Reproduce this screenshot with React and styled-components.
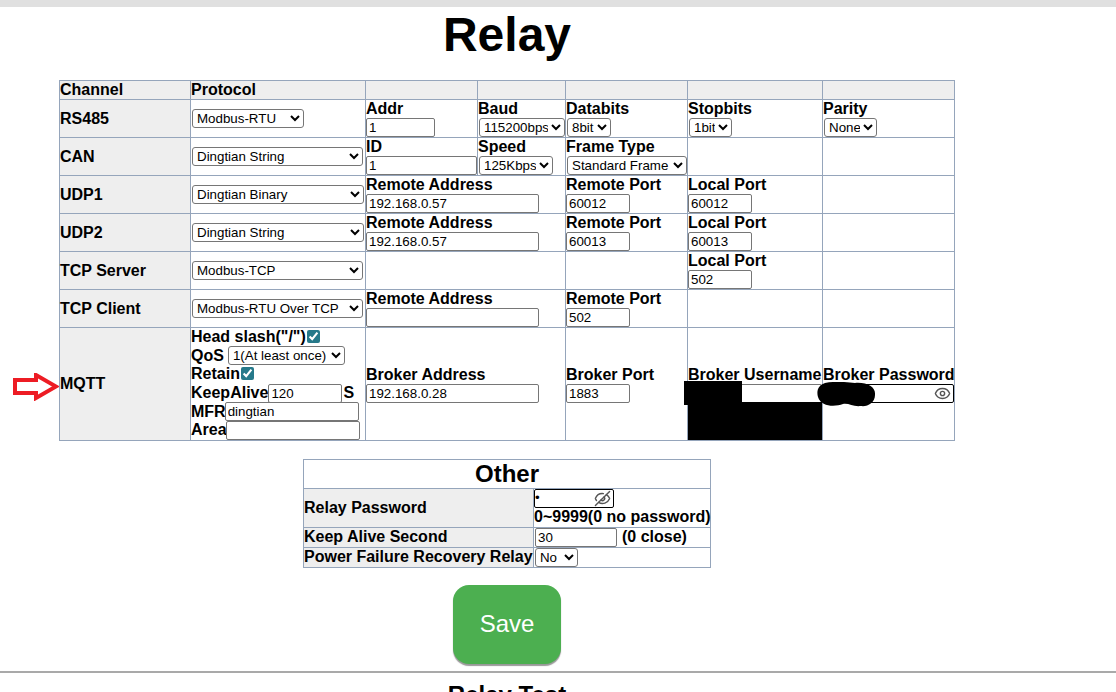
import React from "react";
import styled, { createGlobalStyle } from "styled-components";
import { Eye, EyeOff } from "lucide-react";

const Global = createGlobalStyle`
  html, body { margin: 0; padding: 0; height: 692px; overflow: hidden; background: #fff; }
  body { font-family: "Liberation Sans", Arial, sans-serif; font-size: 16px; color: #000; }
`;

const TopBar = styled.div`height: 7px; background: #e0e0e0;`;
const Content = styled.main`width: 1014px;`;
const Title = styled.h1`
  margin: 0 0 18px; font-size: 48px; line-height: 55px; font-weight: 700; text-align: center;
`;
const Grid = styled.table`
  border-collapse: collapse; table-layout: fixed; margin: 0 auto; width: ${(p) => p.$w}px;
`;
const Row = styled.tr`height: ${(p) => p.$h}px;`;
const Cell = styled.td`
  position: relative; padding: 0; border: 1px solid #95a5bb; font-weight: 700; font-size: 16px;
  line-height: 18px; vertical-align: middle; white-space: nowrap;
  background: ${(p) => (p.$head ? "#eeeeee" : "#fff")};
`;
const BrokerCell = styled(Cell)`padding-top: 2px;`;
const TitleCell = styled(Cell)`font-size: 24px; line-height: 28px; text-align: center;`;
const FieldLabel = styled.div`line-height: 18px;`;
const TextInput = styled.input`
  display: block; box-sizing: border-box; width: ${(p) => p.$w}px; height: 19px; padding: 1px 2px; margin: 0;
  border: 1px solid #767676; border-radius: 2px; font: 400 13.33px "Liberation Sans", Arial, sans-serif; background: #fff; color: #000;
`;
const InlineInput = styled(TextInput)`display: inline-block; flex: none; margin-left: ${(p) => p.$ml ?? 0}px;`;
const Select = styled.select`
  display: block; box-sizing: border-box; width: ${(p) => p.$w}px; height: 19px; margin: 0 0 0 ${(p) => p.$ml ?? 1}px;
  border: 1px solid #767676; border-radius: 3px; font: 400 13.33px "Liberation Sans", Arial, sans-serif; background: #fff; color: #000;
`;
const Line = styled.div`display: flex; align-items: center; height: ${(p) => p.$h ?? 18.6}px; gap: ${(p) => p.$gap ?? 0}px;`;
const Check = styled.input`margin: -2px 0 0 1px; width: 13px; height: 13px; accent-color: #26798a; flex: none;`;
const SecretBox = styled.div`
  position: relative; box-sizing: border-box; width: ${(p) => p.$w}px; height: 19px; border: 1px solid #000; border-radius: 2px;
  color: #000; background: #fff; font: 400 13.33px "Liberation Sans", Arial, sans-serif; line-height: 15px; padding-left: 0;
`;
const SecretIcon = styled.span`
  position: absolute; right: 2px; top: 0; display: flex; color: #555;
  transform: ${(p) => (p.$flip ? "scaleX(-1)" : "none")};
`;
const BlockTop = styled.div`position: absolute; left: -4px; top: 53px; width: 58px; height: 24px; background: #000;`;
const BlockBottom = styled.div`position: absolute; left: 0; right: 0; bottom: 0; height: 38px; background: #000;`;
const Blob = styled.svg`position: absolute; left: -6px; top: 54px;`;
const ArrowMark = styled.svg`position: absolute; left: -47px; top: 45px;`;
const Note = styled.span`margin-left: ${(p) => p.$ml ?? 5}px;`;

const OtherWrap = styled.div`margin-top: 18px;`;
const SaveRow = styled.div`display: flex; justify-content: center; margin-top: 17px;`;
const SaveButton = styled.button`
  width: 108px; height: 79px; border: 0; border-radius: 16px; background: #4caf50; color: #fff;
  font: 400 24px "Liberation Sans", Arial, sans-serif; box-shadow: 0 2px 1px #999;
`;
const Rule = styled.hr`width: 1116px; margin: 7px 0 0; border: 0; border-top: 2px solid #a9a9a9;`;
const SubTitle = styled.h2`margin: 8px 0 0; font-size: 24px; line-height: 28px; text-align: center;`;

const Field = ({ label, children }) => (
  <>
    <FieldLabel>{label}</FieldLabel>
    {children}
  </>
);
const Sel = ({ w, value, ml }) => (
  <Select $w={w} $ml={ml} defaultValue={value}>
    <option>{value}</option>
  </Select>
);
const Inp = ({ w, value = "" }) => <TextInput $w={w} defaultValue={value} />;

const Remote = ({ value }) => <Field label="Remote Address"><Inp w={173} value={value} /></Field>;
const RPort = ({ value }) => <Field label="Remote Port"><Inp w={64} value={value} /></Field>;
const LPort = ({ value }) => <Field label="Local Port"><Inp w={64} value={value} /></Field>;

const App = () => (
  <>
    <Global />
    <TopBar />
    <Content>
      <Title>Relay</Title>
      <Grid $w={896}>
        <colgroup>
          {[131, 175, 112, 88, 122, 135, 132].map((w, i) => <col key={i} width={w} />)}
        </colgroup>
        <tbody>
          <Row $h={18}>
            <Cell $head>Channel</Cell><Cell $head>Protocol</Cell>
            <Cell $head /><Cell $head /><Cell $head /><Cell $head /><Cell $head />
          </Row>
          <Row $h={37}>
            <Cell $head>RS485</Cell>
            <Cell><Sel w={112} value="Modbus-RTU" /></Cell>
            <Cell><Field label="Addr"><Inp w={69} value="1" /></Field></Cell>
            <Cell><Field label="Baud"><Sel w={86} value="115200bps" /></Field></Cell>
            <Cell><Field label="Databits"><Sel w={44} value="8bit" /></Field></Cell>
            <Cell><Field label="Stopbits"><Sel w={43} value="1bit" /></Field></Cell>
            <Cell><Field label="Parity"><Sel w={53} value="None" /></Field></Cell>
          </Row>
          <Row $h={37}>
            <Cell $head>CAN</Cell>
            <Cell><Sel w={171} value="Dingtian String" /></Cell>
            <Cell><Field label="ID"><Inp w={111} value="1" /></Field></Cell>
            <Cell><Field label="Speed"><Sel w={74} value="125Kbps" /></Field></Cell>
            <Cell><Field label="Frame Type"><Sel w={120} value="Standard Frame" /></Field></Cell>
            <Cell /><Cell />
          </Row>
          <Row $h={37}>
            <Cell $head>UDP1</Cell>
            <Cell><Sel w={172} value="Dingtian Binary" /></Cell>
            <Cell colSpan={2}><Remote value="192.168.0.57" /></Cell>
            <Cell><RPort value="60012" /></Cell>
            <Cell><LPort value="60012" /></Cell>
            <Cell />
          </Row>
          <Row $h={37}>
            <Cell $head>UDP2</Cell>
            <Cell><Sel w={172} value="Dingtian String" /></Cell>
            <Cell colSpan={2}><Remote value="192.168.0.57" /></Cell>
            <Cell><RPort value="60013" /></Cell>
            <Cell><LPort value="60013" /></Cell>
            <Cell />
          </Row>
          <Row $h={37}>
            <Cell $head>TCP Server</Cell>
            <Cell><Sel w={171} value="Modbus-TCP" /></Cell>
            <Cell colSpan={2} /><Cell />
            <Cell><LPort value="502" /></Cell>
            <Cell />
          </Row>
          <Row $h={37}>
            <Cell $head>TCP Client</Cell>
            <Cell><Sel w={171} value="Modbus-RTU Over TCP" /></Cell>
            <Cell colSpan={2}><Remote value="" /></Cell>
            <Cell><RPort value="502" /></Cell>
            <Cell /><Cell />
          </Row>
          <Row $h={112}>
            <Cell $head>
              <ArrowMark width="46" height="28" viewBox="0 0 46 28">
                <polygon points="2,7 23,7 23,2 43,13.5 23,25 23,20 2,20" fill="#fff" stroke="#ed1c24" strokeWidth="4" />
              </ArrowMark>
              MQTT
            </Cell>
            <Cell>
              <Line>Head slash("/")<Check type="checkbox" defaultChecked /></Line>
              <Line $gap={4}>QoS <Sel w={117} ml={0} value="1(At least once)" /></Line>
              <Line>Retain<Check type="checkbox" defaultChecked /></Line>
              <Line>KeepAlive<InlineInput $w={74} defaultValue="120" /><Note $ml={1}>S</Note></Line>
              <Line>MFR<InlineInput $w={134} $ml={-1} defaultValue="dingtian" /></Line>
              <Line>Area<InlineInput $w={134} $ml={-1} defaultValue="" /></Line>
            </Cell>
            <BrokerCell colSpan={2}><Field label="Broker Address"><Inp w={173} value="192.168.0.28" /></Field></BrokerCell>
            <BrokerCell><Field label="Broker Port"><Inp w={64} value="1883" /></Field></BrokerCell>
            <BrokerCell>
              <Field label="Broker Username"><Inp w={134} value="" /></Field>
              <BlockTop />
              <BlockBottom />
            </BrokerCell>
            <BrokerCell>
              <Field label="Broker Password">
                <SecretBox $w={131}>
                  <SecretIcon><Eye size={17} strokeWidth={2} /></SecretIcon>
                </SecretBox>
              </Field>
              <Blob width="60" height="25" viewBox="0 0 60 25">
                <path d="M8 1 C18 -1 30 0 38 1 C50 0 59 5 58 13 C58 21 50 25 44 24 C36 25 32 21 26 22 C18 25 4 25 1 15 C-1 8 2 3 8 1 Z" fill="#000" />
              </Blob>
            </BrokerCell>
          </Row>
        </tbody>
      </Grid>

      <OtherWrap>
        <Grid $w={408}>
          <colgroup><col width={230} /><col width={177} /></colgroup>
          <tbody>
            <Row $h={28}><TitleCell colSpan={2}>Other</TitleCell></Row>
            <Row $h={39}>
              <Cell $head>Relay Password</Cell>
              <Cell>
                <SecretBox $w={80}>
                  •
                  <SecretIcon $flip><EyeOff size={17} strokeWidth={2} /></SecretIcon>
                </SecretBox>
                0~9999(0 no password)
              </Cell>
            </Row>
            <Row $h={19}>
              <Cell $head>Keep Alive Second</Cell>
              <Cell><Line $h={19}><InlineInput $w={82} $ml={1} defaultValue="30" /><Note>(0 close)</Note></Line></Cell>
            </Row>
            <Row $h={20}>
              <Cell $head>Power Failure Recovery Relay</Cell>
              <Cell><Sel w={43} ml={1} value="No" /></Cell>
            </Row>
          </tbody>
        </Grid>
      </OtherWrap>

      <SaveRow><SaveButton>Save</SaveButton></SaveRow>
      <Rule />
      <SubTitle>Relay Test</SubTitle>
    </Content>
  </>
);

export default App;
